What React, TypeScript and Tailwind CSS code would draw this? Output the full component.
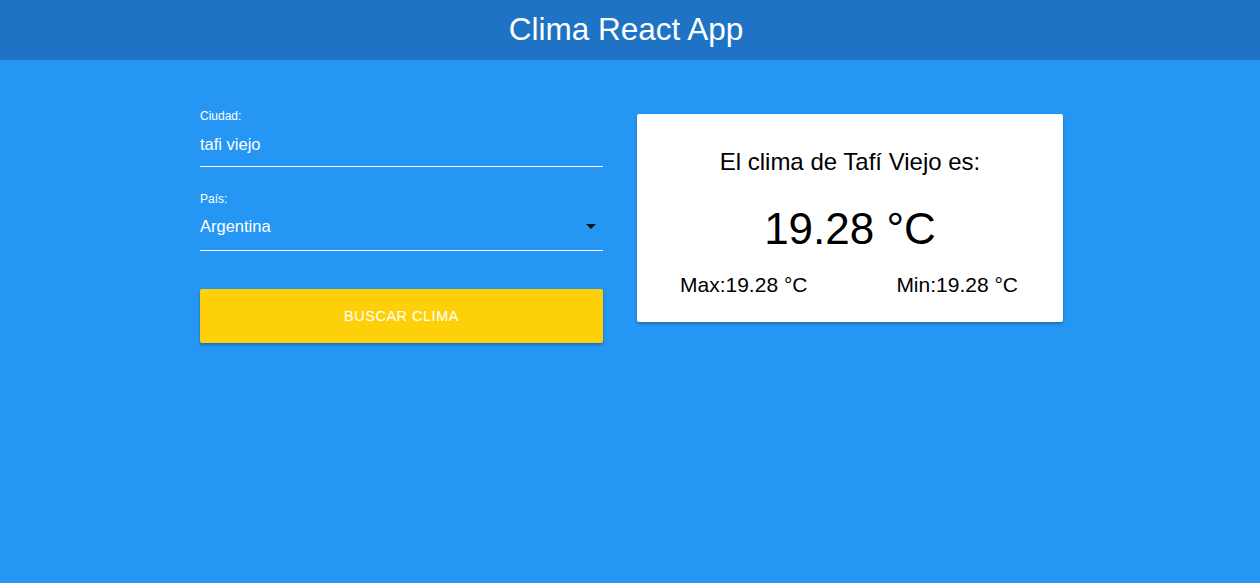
export default function App() {
  return (
    <div className="min-h-[583px] bg-[#2596f3] font-['Liberation_Sans',Arial,sans-serif]">
      <header className="flex h-[60px] items-center justify-center bg-[#1e73c5] pr-[8px]">
        <h1 className="text-[31.5px] text-white">Clima React App</h1>
      </header>

      <main className="flex gap-[34px] pl-[200px] pt-[50px]">
        <form className="w-[403px]">
          <div>
            <label className="block text-[12px] leading-[12px] text-white">Ciudad:</label>
            <div className="flex h-[45px] items-center border-b border-white text-[16.5px] text-white">
              tafi viejo
            </div>
          </div>

          <div className="mt-[26px]">
            <label className="block text-[12px] leading-[12px] text-white">País:</label>
            <div className="flex h-[46px] items-center justify-between border-b border-white pb-[2px] text-[16.5px] text-white">
              <span>Argentina</span>
              <svg width="10" height="5" viewBox="0 0 10 5" className="mr-[7px]">
                <path d="M0 0h10L5 5z" fill="#111" />
              </svg>
            </div>
          </div>

          <button
            type="button"
            className="mt-[38px] flex h-[54px] w-full items-center justify-center rounded-[2px] bg-[#fed00a] pt-[2px] text-[14.5px] tracking-[0.5px] text-white shadow-[0_2px_3px_rgba(0,0,0,0.25)]"
          >
            BUSCAR CLIMA
          </button>
        </form>

        <section className="mt-[4px] flex h-[208px] w-[426px] flex-col rounded-[2px] bg-white shadow-[0_2px_3px_rgba(0,0,0,0.25)]">
          <p className="pt-[34px] text-center text-[24px] leading-[28px] text-black">El clima de Tafí Viejo es:</p>
          <p className="pt-[27px] text-center text-[44px] leading-[52px] text-black">19.28 °C</p>
          <div className="flex justify-between pl-[43px] pr-[45px] pt-[18px] text-[21px] leading-[24px] text-black">
            <span>Max:19.28 °C</span>
            <span>Min:19.28 °C</span>
          </div>
        </section>
      </main>
    </div>
  );
}
